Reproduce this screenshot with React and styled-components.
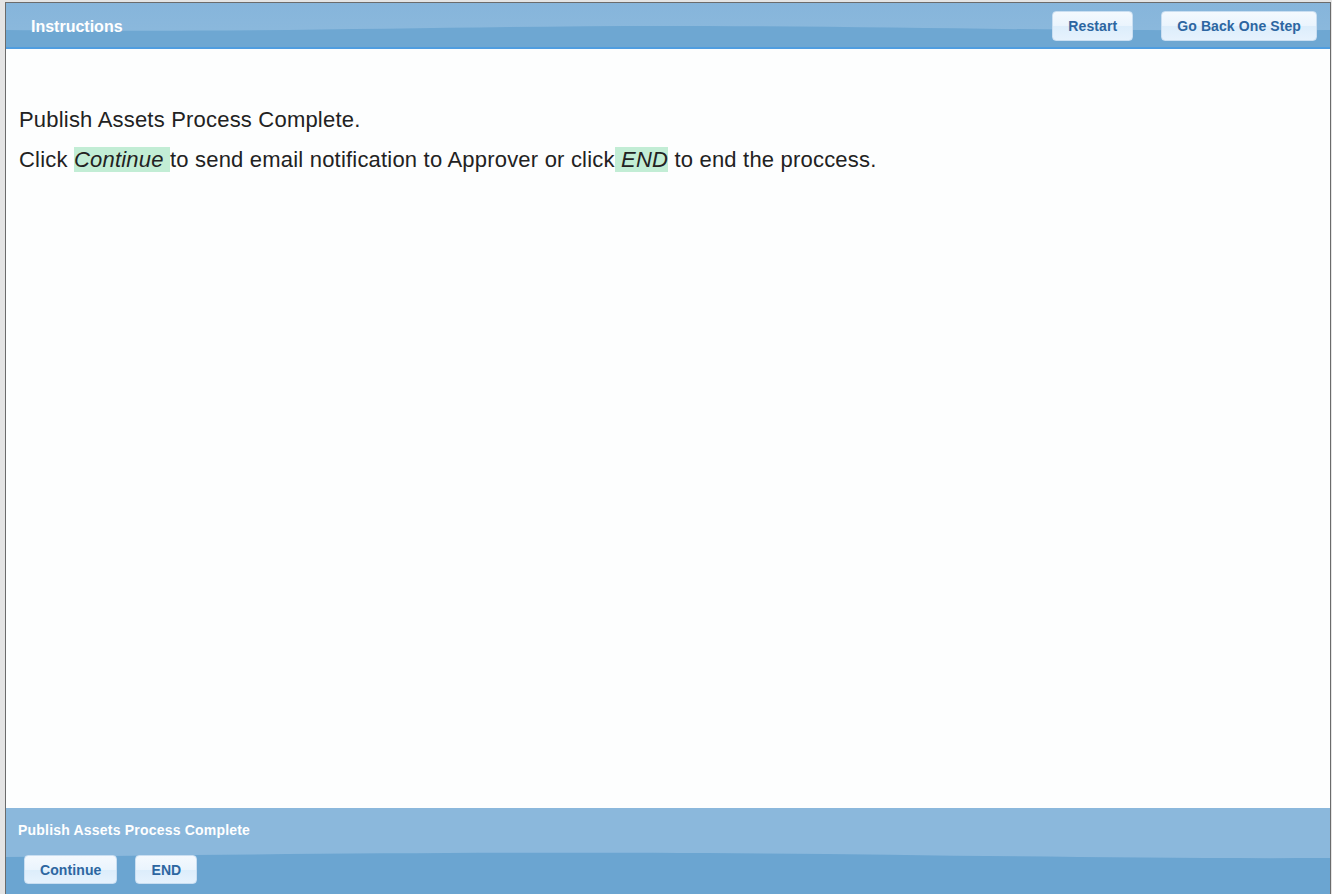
import React from "react";
import styled, { createGlobalStyle } from "styled-components";

const GlobalStyle = createGlobalStyle`
  html, body {
    margin: 0;
    padding: 0;
    background: #e4e4e4;
    overflow: hidden;
  }
  body {
    font-family: "Liberation Sans", Arial, sans-serif;
    letter-spacing: 0.2px;
  }
`;

const Frame = styled.div`
  box-sizing: border-box;
  margin: 2px 0 0 5px;
  width: 1326px;
  height: 900px;
  border: 1px solid #6b6b6b;
  background: #fdfefe;
  display: flex;
  flex-direction: column;
  overflow: hidden;
`;

const Bar = styled.div`
  position: relative;
  flex: none;
  background: #8ab8dc;
`;

const Wave = styled.svg`
  position: absolute;
  left: 0;
  top: 0;
  width: 100%;
  height: 100%;
  display: block;
`;

const HeaderBar = styled(Bar)`
  box-sizing: border-box;
  height: 46px;
  padding: 2px 13px 0 25px;
  border-bottom: 2px solid #4f9de0;
  display: flex;
  align-items: center;
`;

const FooterBar = styled(Bar)`
  height: 93px;
  box-sizing: border-box;
  padding-top: 14px;
  display: flex;
  flex-direction: column;
`;

const Title = styled.div`
  position: relative;
  top: 1px;
  color: #fff;
  font-weight: bold;
  font-size: 16px;
  line-height: 20px;
  letter-spacing: 0;
  flex: 1;
`;

const ButtonRow = styled.div`
  position: relative;
  display: flex;
  gap: ${(p) => p.$gap}px;
  padding-left: ${(p) => p.$inset || 0}px;
`;

const Button = styled.button`
  box-sizing: border-box;
  height: ${(p) => p.$h || 30}px;
  padding: 0 15px;
  border: 1px solid #c9def1;
  border-radius: 4px;
  background: linear-gradient(#f4f9fe 0%, #eaf4fd 50%, #dcedfb 51%, #e6f2fd 100%);
  color: #2d66a1;
  font-family: "Liberation Sans", Arial, sans-serif;
  font-weight: bold;
  font-size: 14px;
  letter-spacing: 0.1px;
  cursor: pointer;
`;

const Content = styled.main`
  flex: 1;
  padding: 51px 13px 0;
  color: #222;
  font-size: 22px;
`;

const Line = styled.p`
  margin: 0;
  line-height: 40px;
`;

const Mark = styled.em`
  background: #c2edd5;
`;

const Status = styled.div`
  position: relative;
  color: #fff;
  font-weight: bold;
  font-size: 14px;
  line-height: 16px;
  padding-left: 12px;
  margin-bottom: 17px;
`;

const HeaderWave = () => (
  <Wave viewBox="0 0 1324 44" preserveAspectRatio="none">
    <defs>
      <linearGradient id="hTop" x1="0" y1="0" x2="0" y2="1">
        <stop offset="0" stopColor="#86b5db" />
        <stop offset="1" stopColor="#8dbadd" />
      </linearGradient>
    </defs>
    <rect width="1324" height="44" fill="url(#hTop)" />
    <path
      d="M0 27 C 300 30, 480 22, 700 23 S 1100 29, 1324 27 L1324 44 L0 44 Z"
      fill="#6ea7d2"
    />
  </Wave>
);

const FooterWave = () => (
  <Wave viewBox="0 0 1324 93" preserveAspectRatio="none">
    <rect width="1324" height="93" fill="#8bb8dc" />
    <path
      d="M0 49 C 250 46, 500 44, 700 45 S 1100 51, 1324 50 L1324 93 L0 93 Z"
      fill="#6ba5d1"
    />
  </Wave>
);

export default function App() {
  return (
    <>
      <GlobalStyle />
      <Frame>
        <HeaderBar>
          <HeaderWave />
          <Title>Instructions</Title>
          <ButtonRow $gap={28}>
            <Button>Restart</Button>
            <Button>Go Back One Step</Button>
          </ButtonRow>
        </HeaderBar>
        <Content>
          <Line>Publish Assets Process Complete.</Line>
          <Line>
            Click <Mark>Continue </Mark>to send email notification to Approver or click
            <Mark> END</Mark> to end the proccess.
          </Line>
        </Content>
        <FooterBar>
          <FooterWave />
          <Status>Publish Assets Process Complete</Status>
          <ButtonRow $gap={18} $inset={18}>
            <Button $h={29}>Continue</Button>
            <Button $h={29}>END</Button>
          </ButtonRow>
        </FooterBar>
      </Frame>
    </>
  );
}
